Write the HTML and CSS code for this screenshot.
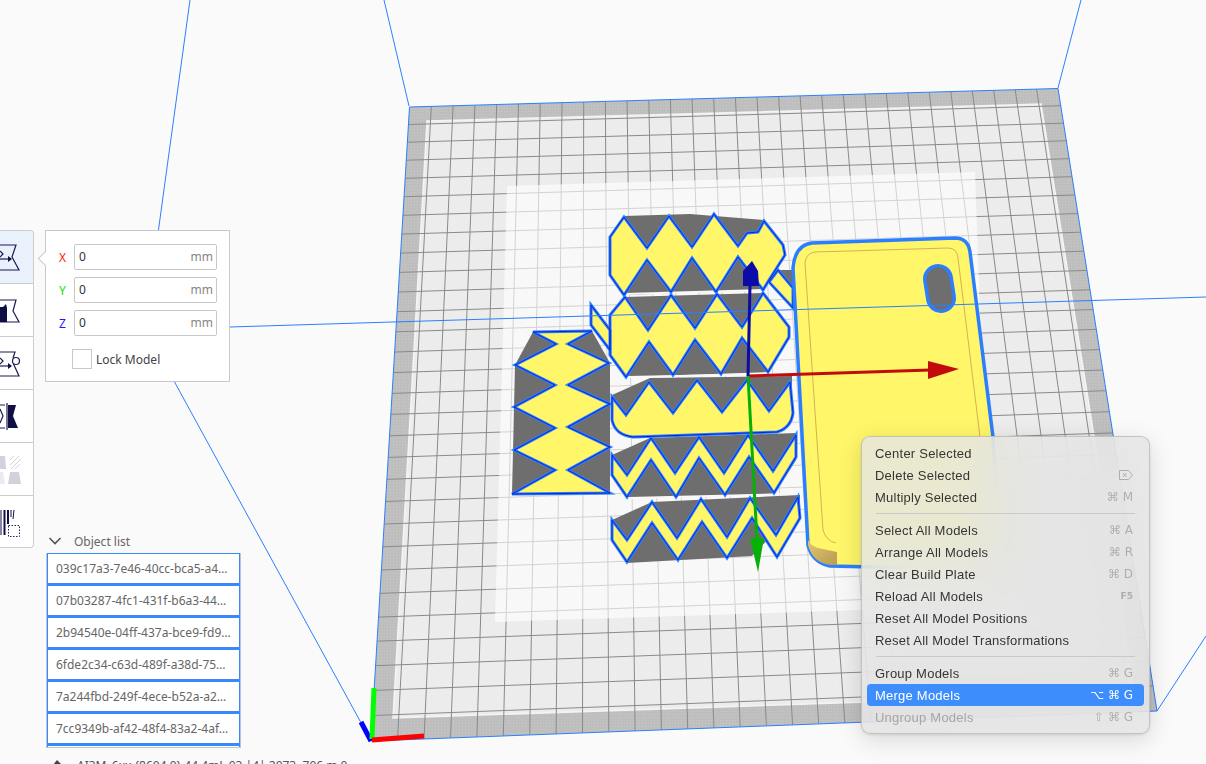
FILE: index.html
```html
<!DOCTYPE html>
<html lang="en">
<head>
<meta charset="utf-8">
<title>Cura</title>
<link rel="stylesheet" href="styles.css">
</head>
<body>
<div class="app">
  <svg class="scene" width="1206" height="764" viewBox="0 0 1206 764">
    <defs>
      <pattern id="dots" width="3" height="3" patternUnits="userSpaceOnUse"><rect width="1" height="1" fill="#ffffff" fill-opacity=".16"/></pattern>
      <linearGradient id="tan" x1="0" y1="0" x2="1" y2="1"><stop offset="0" stop-color="#e3c66a"/><stop offset="1" stop-color="#b89a55"/></linearGradient>
      <g id="parts">
        <polygon points="610,237 624,217 647,248 669,216 692,247 714,214 738,246 747,233 758,232 764,221 783,245 785,255 769,280 763,290 738,257 716,292 692,258 671,292 647,260 624,295 610,275"/>
        <polygon points="610,315 625,297 648,330 671,295 695,328 717,294 742,327 757,303 763,293 789,327 789,337 768,372 742,338 721,374 695,340 673,375 649,342 626,377 610,355"/>
        <path d="M612 397L626 415L649 382L673 413L697 380L722 412L747 380L769 411L790 382L793 413Q791 428 777 432L633 437Q615 435 612 420Z"/>
        <polygon points="612,455 627,475 651,438 675,473 699,437 724,473 748,435 773,471 796,435 796,457 774,493 749,457 725,495 699,458 676,497 651,460 627,497 612,475"/>
        <polygon points="612,520 627,540 652,502 677,538 701,499 727,537 750,498 776,535 798,497 800,518 777,557 752,518 727,558 702,522 678,560 652,523 627,562 612,540"/>
        <polygon points="533,332 592,331 568,344 609,363 568,385 610,404 568,427 610,447 568,470 610,493 512,494 555,470 514,450 555,428 514,407 555,385 515,365 556,344"/>
        <polygon points="591,305 610,330 610,350 591,325"/>
        <polygon points="778,270 793,288 793,308 769,282"/>
      </g>
    </defs>

    <g class="frame">
      <path d="M409 106L384 0M1058 88L1081 0M371 741L145 328L190 0M1157 711L1206 636"/>
    </g>

    <polygon class="plate-band" points="409.5,107 1058,88.5 1157,711 371,741"/>
    <polygon class="plate-dots" points="409.5,107 1058,88.5 1157,711 371,741"/>
    <polygon class="plate-inner" points="427,121 1041,104 1135,693 393,718"/>
    <polygon class="plate-dots" points="427,121 1041,104 1135,693 393,718"/>
    <g id="grid" class="grid"></g>
    <polygon class="plate-light" points="507,186 975,172 990,606 495,622"/>
    <polygon class="plate-edge" points="409.5,107 1058,88.5 1157,711 371,741"/>

    <g class="solid">
      <polygon points="624,216 690,214 764,220 764,262 763,290 624,295 612,270"/>
      <polygon points="625,297 763,293 768,372 626,377"/>
      <polygon points="612,395 650,378 792,376 792,418 612,418"/>
      <polygon points="612,455 650,438 796,433 796,460 774,494 627,498"/>
      <polygon points="612,520 652,502 800,495 800,505 777,530 752,556 627,563 612,540"/>
      <polygon points="533,332 592,331 610,363 610,493 512,494 515,365"/>
      <polygon points="778,270 793,270 793,290"/>
    </g>
    <path class="split" d="M625 294L765 290M628 377L770 374M628 498L790 494"/>
    <use href="#parts" class="part-fill"/>
    <use href="#parts" class="part-edge"/>

    <path class="phone" d="M793 268Q795 245 812 243L955 238Q968 238 970 252L993 437L1000 570L830 566Q812 562 808 545Z"/>
    <path class="phone-tan" d="M808 540Q812 548 823 549L837 552V565L830 565Q812 562 808 545Z"/>
    <path class="phone-rim" d="M805 263Q806 253 815 252L948 248Q957 248 958 258L980 437M805 263L823 530Q826 541 836 543"/>
    <g class="hole">
      <line class="hole-edge" x1="938" y1="279" x2="941" y2="298"/>
      <line class="hole-in" x1="938" y1="279" x2="941" y2="298"/>
    </g>
    <path class="frame" d="M230 327L1206 297"/>

    <path class="axis-red" d="M748 376L930 370"/>
    <polygon class="fill-red" points="928,361 928,379 959,369"/>
    <path class="axis-blue" d="M748 376L750 285"/>
    <polygon class="fill-blue" points="752,261 758,271 759,286 743,286 743,271"/>
    <path class="axis-green" d="M748 376L757 540"/>
    <polygon class="fill-green" points="750,538 764,538 758,572"/>

    <path class="origin-b" d="M371 741L361 722"/>
    <path class="origin-g" d="M372 739L374 688"/>
    <path class="origin-r" d="M372 740L424 736"/>
  </svg>

  <div class="left">
    <div class="toolbar">
      <div class="tool is-active">
        <svg width="33" height="52" viewBox="0 0 33 52"><path class="ic" d="M0 14H16L12 26L19 39H0"/><path class="ic" d="M0 20L3 23L0 26"/><path class="ic" d="M0 28H8"/><polygon class="icf" points="8,25 8,31 12,28"/></svg>
      </div>
      <div class="tool">
        <svg width="33" height="52" viewBox="0 0 33 52"><path class="ic" d="M0 16H16L13 27L19 38H0"/><polygon class="icf" points="0,23 3,23 6,20 7,24 7,38 0,38"/></svg>
      </div>
      <div class="tool">
        <svg width="33" height="52" viewBox="0 0 33 52"><path class="ic" d="M0 15H15L13 21M13.5 27L19 39H0"/><circle class="ic" cx="16" cy="24" r="3.5"/><path class="ic" d="M0 21L3 24L0 27"/><path class="ic" d="M0 29H8"/><polygon class="icf" points="8,26 8,32 12,29"/></svg>
      </div>
      <div class="tool">
        <svg width="33" height="52" viewBox="0 0 33 52"><path class="ic" d="M7 13V40M5 15H0M0 19L3 26L0 33M0 38H5"/><polygon class="icf" points="8,15 16,15 13,26 18,38 8,38"/></svg>
      </div>
      <div class="tool">
        <svg width="33" height="52" viewBox="0 0 33 52"><polygon class="off" points="0,13 5,13 6,26 0,26"/><path class="off-h" d="M10 17L14 13M10 22L19 13M11 26L21 16M15 26L20 21"/><polygon class="off-l" points="0,29 3,29 5,41 0,41"/><polygon class="off" points="10,29 19,29 21,41 8,41"/></svg>
      </div>
      <div class="tool">
        <svg width="33" height="52" viewBox="0 0 33 52"><path class="bar" d="M1 14V39"/><path class="bar-w" d="M4.5 14V39M8 14V28"/><path class="bar" d="M11 14V21M14 14L13 23"/><rect class="dash" x="8.5" y="29.5" width="11" height="11"/></svg>
      </div>
    </div>

    <div class="side">
      <div class="move">
        <div class="move-tip"></div>
        <div class="field"><span class="axis x">X</span><div class="input"><span>0</span><span class="unit">mm</span></div></div>
        <div class="field"><span class="axis y">Y</span><div class="input"><span>0</span><span class="unit">mm</span></div></div>
        <div class="field"><span class="axis z">Z</span><div class="input"><span>0</span><span class="unit">mm</span></div></div>
        <div class="lock"><span class="check"></span><span>Lock Model</span></div>
      </div>

      <div class="objects">
        <div class="objects-head">
          <svg width="14" height="8" viewBox="0 0 14 8"><path class="chev" d="M1.5 1L7 6.5L12.5 1"/></svg>
          <span>Object list</span>
        </div>
        <div class="list">
          <div class="row">039c17a3-7e46-40cc-bca5-a4…</div>
          <div class="row">07b03287-4fc1-431f-b6a3-44…</div>
          <div class="row">2b94540e-04ff-437a-bce9-fd9…</div>
          <div class="row">6fde2c34-c63d-489f-a38d-75…</div>
          <div class="row">7a244fbd-249f-4ece-b52a-a2…</div>
          <div class="row">7cc9349b-af42-48f4-83a2-4af…</div>
          <div class="row"></div>
        </div>
        <div class="job">
          <svg width="12" height="12" viewBox="0 0 12 12"><path class="job-ic" d="M2 6L6 1L10 5L7 10Z"/></svg>
          <span>AI3M_6xx {8604.0} 44.4mL 03 |4| 2073, 706 m 0</span>
        </div>
      </div>
    </div>
  </div>

  <div class="menu">
    <div class="item"><span>Center Selected</span></div>
    <div class="item"><span>Delete Selected</span><svg class="del" width="14" height="10" viewBox="0 0 14 10"><path d="M0.5 0.5H9.5L13.5 5L9.5 9.5H0.5ZM4 3L7.5 7M7.5 3L4 7"/></svg></div>
    <div class="item"><span>Multiply Selected</span><span class="key">⌘ M</span></div>
    <div class="sep"></div>
    <div class="item"><span>Select All Models</span><span class="key">⌘ A</span></div>
    <div class="item"><span>Arrange All Models</span><span class="key">⌘ R</span></div>
    <div class="item"><span>Clear Build Plate</span><span class="key">⌘ D</span></div>
    <div class="item"><span>Reload All Models</span><span class="key small">F5</span></div>
    <div class="item"><span>Reset All Model Positions</span></div>
    <div class="item"><span>Reset All Model Transformations</span></div>
    <div class="sep"></div>
    <div class="item"><span>Group Models</span><span class="key">⌘ G</span></div>
    <div class="item is-hot"><span>Merge Models</span><span class="key">⌥ ⌘ G</span></div>
    <div class="item is-off"><span>Ungroup Models</span><span class="key">⇧ ⌘ G</span></div>
  </div>
</div>
<script src="script.js"></script>
</body>
</html>
```
FILE: styles.css
```css
* { box-sizing: border-box; }
html, body { margin: 0; padding: 0; }
body { font-family: "Noto Sans", sans-serif; font-size: 12px; color: #333; }
.app { position: relative; width: 1206px; height: 764px; overflow: hidden; background: #fafafa; }

/* 3D viewport */
.scene { position: absolute; left: 0; top: 0; display: block; }
.frame { fill: none; stroke: #2b7fff; stroke-width: 1; }
.frame path { fill: none; }
.plate-band { fill: #bebebe; }
.plate-inner { fill: #ececec; stroke: #f4f4f4; stroke-width: 1.5; }
.plate-dots { fill: url(#dots); }
.plate-light { fill: #ffffff; fill-opacity: .62; }
.plate-edge { fill: none; stroke: #2b7fff; stroke-width: 1; }
.grid line { stroke: #8a8a8a; stroke-width: 1; }
.solid { fill: #6e6e6e; }
.split { fill: none; stroke: #f8f8f8; stroke-width: 2; }
.part-fill { fill: #fff66a; stroke: #2b7fff; stroke-width: 3; stroke-linejoin: miter; }
.part-edge { fill: none; stroke: #0a22d6; stroke-width: 1; }
.phone { fill: #fff66a; stroke: #2b7fff; stroke-width: 3.5; }
.phone-tan { fill: url(#tan); }
.phone-rim { fill: none; stroke: #d2b354; stroke-width: 1; }
.hole-edge { stroke: #2b7fff; stroke-width: 30; stroke-linecap: round; }
.hole-in { stroke: #6e6e6e; stroke-width: 23; stroke-linecap: round; }
.axis-red { stroke: #c20c0c; stroke-width: 3; }
.fill-red { fill: #c20c0c; }
.axis-blue { stroke: #0b0ba8; stroke-width: 3; }
.fill-blue { fill: #0b0ba8; }
.axis-green { stroke: #06b006; stroke-width: 3; }
.fill-green { fill: #06b006; }
.origin-r { stroke: #ff0000; stroke-width: 5; }
.origin-g { stroke: #00ff00; stroke-width: 5; }
.origin-b { stroke: #0000ff; stroke-width: 5; }

/* Left tools */
.left { position: relative; display: flex; align-items: flex-start; padding-top: 230px; }
.toolbar { width: 34px; background: #fff; border: 1px solid #cdcdcd; border-left: 0; border-radius: 0 4px 4px 0; overflow: hidden; flex: none; }
.tool { height: 53px; border-bottom: 1px solid #cdcdcd; }
.tool:last-child { height: 51px; border-bottom: 0; }
.tool svg { display: block; }
.tool.is-active { background: #e8f1fc; }
.ic { fill: none; stroke: #1b1b50; stroke-width: 1.2; }
.icf { fill: #0f0f45; }
.off { fill: #d2d2dc; }
.off-l { fill: #eaeaef; }
.off-h { fill: none; stroke: #d2d2dc; stroke-width: 1; }
.bar { fill: none; stroke: #0f0f45; stroke-width: 1; }
.bar-w { fill: none; stroke: #0f0f45; stroke-width: 2; }
.dash { fill: #fff; stroke: #1b1b50; stroke-width: 1; stroke-dasharray: 1.5 1.5; }

.side { margin-left: 11px; width: 195px; flex: none; }
.move { position: relative; width: 185px; height: 152px; background: #fff; border: 1px solid #c8c8c8; padding: 13px 12px 0 0; }
.move-tip { position: absolute; left: -6px; top: 22px; width: 11px; height: 11px; background: #fff; border-left: 1px solid #c8c8c8; border-bottom: 1px solid #c8c8c8; transform: rotate(45deg); }
.field { display: flex; align-items: center; height: 26px; margin-bottom: 7px; }
.axis { width: 28px; padding-left: 13px; font-size: 12px; flex: none; }
.axis.x { color: #ff1a1a; }
.axis.y { color: #11dd11; }
.axis.z { color: #1a1aff; }
.input { flex: 1; height: 26px; border: 1px solid #c8c8c8; border-radius: 2px; display: flex; justify-content: space-between; align-items: center; padding: 0 3px 1px 4px; font-size: 12px; color: #333; }
.unit { color: #858585; }
.lock { display: flex; align-items: center; gap: 4px; margin: 13px 0 0 26px; color: #444; }
.check { width: 20px; height: 20px; border: 1px solid #c8c8c8; display: block; }

.objects { margin-top: 149px; }
.objects-head { display: flex; align-items: center; height: 20px; margin: 0 0 2px 3px; color: #666; }
.objects-head svg { margin-right: 12px; }
.chev { fill: none; stroke: #555; stroke-width: 1.6; }
.list { width: 195px; height: 195px; margin: 0 0 0 1px; overflow: hidden; border: 1px solid #b9c6d8; border-top: 0; border-bottom: 1px solid #b9c6d8; background: #fff; }
.row { height: 32px; border: 1px solid #3a89fb; border-bottom-width: 2px; padding: 0 0 0 8px; line-height: 29px; color: #666; white-space: nowrap; overflow: hidden; background: #fff; }
.job { display: flex; align-items: center; gap: 14px; margin: 8px 0 0 6px; color: #555; white-space: nowrap; height: 18px; }
.job svg { flex: none; }
.job-ic { fill: #444; }

/* Context menu */
.menu { position: absolute; left: 861px; top: 436px; width: 289px; height: 298px; padding: 5px; border-radius: 9px; border: 1px solid rgba(170,170,170,.6); background: rgba(229,229,229,.82); backdrop-filter: blur(28px); box-shadow: 0 6px 24px rgba(0,0,0,.14), 0 1px 3px rgba(0,0,0,.1); font-family: "Liberation Sans", Arimo, sans-serif; font-size: 13px; color: #353535; }
.item { height: 22px; display: flex; align-items: center; justify-content: space-between; padding: 0 11px 0 8px; border-radius: 4px; white-space: nowrap; letter-spacing: .23px; }
.key { font-family: "DejaVu Sans", sans-serif; font-size: 12px; color: #aeaeae; letter-spacing: 0; }
.key.small { font-size: 9px; font-weight: bold; }
.del { fill: none; stroke: #aeaeae; stroke-width: 1; }
.sep { height: 1px; margin: 5px 9px; background: #c9c9c9; }
.item.is-hot { background: #3d8dfd; color: #fff; }
.item.is-hot .key { color: #fff; }
.item.is-off { color: #a6a6a6; }
```
FILE: script.js
```js
// Draws the build-plate grid through the perspective of the camera.
(function () {
  var p = [[409.5, 107], [1058, 88.5], [1157, 711], [371, 741]];
  var dx1 = p[1][0] - p[2][0], dx2 = p[3][0] - p[2][0], sx = p[0][0] - p[1][0] + p[2][0] - p[3][0];
  var dy1 = p[1][1] - p[2][1], dy2 = p[3][1] - p[2][1], sy = p[0][1] - p[1][1] + p[2][1] - p[3][1];
  var den = dx1 * dy2 - dx2 * dy1;
  var g = (sx * dy2 - dx2 * sy) / den, h = (dx1 * sy - sx * dy1) / den;
  var a = p[1][0] - p[0][0] + g * p[1][0], b = p[3][0] - p[0][0] + h * p[3][0], c = p[0][0];
  var d = p[1][1] - p[0][1] + g * p[1][1], e = p[3][1] - p[0][1] + h * p[3][1], f = p[0][1];
  function map(u, v) {
    var w = g * u + h * v + 1;
    return [(a * u + b * v + c) / w, (d * u + e * v + f) / w];
  }
  var root = document.getElementById('grid');
  function add(s, t) {
    var l = document.createElementNS('http://www.w3.org/2000/svg', 'line');
    l.setAttribute('x1', s[0].toFixed(1)); l.setAttribute('y1', s[1].toFixed(1));
    l.setAttribute('x2', t[0].toFixed(1)); l.setAttribute('y2', t[1].toFixed(1));
    root.appendChild(l);
  }
  for (var i = 1; i < 30; i++) {
    add(map(i / 30, 0), map(i / 30, 1));
    add(map(0, i / 30), map(1, i / 30));
  }
})();
```
